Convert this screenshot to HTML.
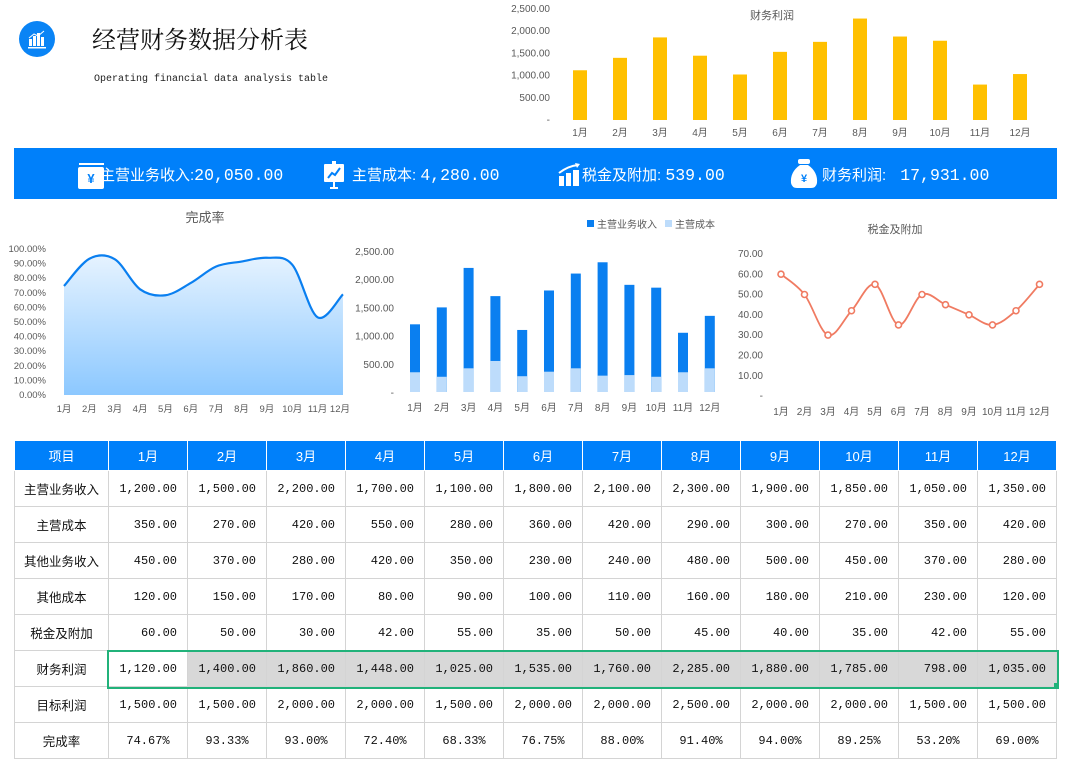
<!DOCTYPE html>
<html><head><meta charset="utf-8">
<style>
body{margin:0;width:1075px;height:769px;background:#fff;position:relative;overflow:hidden;font-family:"Liberation Sans","Noto Sans CJK SC",sans-serif}
.abs{position:absolute}
.banner{left:14px;top:148px;width:1043px;height:51px;background:#0080fa;color:#fff}
.bt{position:absolute;top:16px;font-size:15px;white-space:nowrap}
.bt .n{font-family:"Liberation Mono",monospace;font-size:16.5px}
table{position:absolute;left:14px;top:440px;border-collapse:collapse;table-layout:fixed}
td,th{border:1px solid #d4d4d4;height:35px;padding:0;font-size:12px;font-family:"Liberation Mono","Noto Sans CJK SC",monospace;color:#111}
th{background:#0080fa;color:#fff;font-weight:normal;height:29px;font-family:"Liberation Sans","Noto Sans CJK SC",sans-serif;font-size:13px;border-color:#fff}
td{text-align:right;padding-right:10px}
td.l{text-align:center;padding:0;font-family:"Liberation Sans","Noto Sans CJK SC",sans-serif;font-size:12.5px}
td.c{text-align:center;padding:0}
tr.p td.g{background:#d8d8d8}
svg text{font-family:"Liberation Sans","Noto Sans CJK SC",sans-serif}
</style></head><body>
<svg class="abs" style="left:19px;top:21px" width="36" height="36" viewBox="0 0 36 36">
<circle cx="18" cy="18" r="18" fill="#0a84f5"/>
<g fill="#fff"><rect x="10" y="18" width="3" height="7"/><rect x="14" y="15" width="3" height="10"/><rect x="18" y="12" width="3" height="13"/><rect x="22" y="16" width="3" height="9"/><rect x="9" y="26" width="18" height="1.5"/></g>
<polyline points="10,17 15,13 19,15 25,10" stroke="#fff" fill="none" stroke-width="1"/>
</svg>
<div class="abs" style="left:92px;top:20px;font-size:24px;font-family:'Liberation Serif','Noto Serif CJK SC',serif;color:#111">经营财务数据分析表</div>
<div class="abs" style="left:94px;top:74px;font-size:10px;font-family:'Liberation Mono',monospace;color:#222">Operating financial data analysis table</div>

<svg id="top" class="abs" style="left:500px;top:0" width="560" height="145"></svg>

<div class="abs banner">
 <svg class="abs" style="left:64px;top:15px" width="28" height="26" viewBox="0 0 28 26"><rect x="1" y="0" width="25" height="2" fill="#fff"/><rect x="0" y="4" width="26" height="22" rx="2" fill="#fff"/><text x="13" y="20" text-anchor="middle" fill="#0080fa" font-size="13" font-weight="bold">¥</text></svg>
 <div class="bt" style="left:86px">主营业务收入:<span class="n">20,050.00</span></div>
 <svg class="abs" style="left:310px;top:13px" width="20" height="28" viewBox="0 0 20 28"><rect x="8" y="0" width="4" height="3" fill="#fff"/><rect x="0" y="3" width="20" height="18" rx="1" fill="#fff"/><polyline points="4,17 8,12 11,14 16,7" stroke="#0080fa" stroke-width="2" fill="none"/><rect x="9" y="21" width="2" height="5" fill="#fff"/><rect x="6" y="26" width="8" height="2" fill="#fff"/></svg>
 <div class="bt" style="left:338px">主营成本: <span class="n">4,280.00</span></div>
 <svg class="abs" style="left:544px;top:14px" width="24" height="24" viewBox="0 0 24 24"><rect x="1" y="14" width="5" height="10" fill="#fff"/><rect x="8" y="11" width="5" height="13" fill="#fff"/><rect x="15" y="8" width="6" height="16" fill="#fff"/><path d="M1 11 Q10 4 20 3" stroke="#fff" stroke-width="2" fill="none"/><path d="M17 1 L22 2 L19 6Z" fill="#fff"/></svg>
 <div class="bt" style="left:568px">税金及附加: <span class="n">539.00</span></div>
 <svg class="abs" style="left:776px;top:11px" width="28" height="29" viewBox="0 0 28 29"><rect x="8" y="0" width="12" height="5" rx="2" fill="#fff"/><path d="M10 6 H18 Q28 13 27 24 Q26 29 21 29 H7 Q2 29 1 24 Q0 13 10 6Z" fill="#fff"/><text x="14" y="23" text-anchor="middle" fill="#0080fa" font-size="11" font-weight="bold">¥</text></svg>
 <div class="bt" style="left:808px">财务利润: <span class="n">&nbsp;17,931.00</span></div>
</div>

<svg id="c1" class="abs" style="left:0;top:200px" width="350" height="230"></svg>
<svg id="c2" class="abs" style="left:345px;top:200px" width="390" height="230"></svg>
<svg id="c3" class="abs" style="left:730px;top:200px" width="345" height="230"></svg>

<table id="tb"></table>
<div class="abs" style="left:107px;top:650px;width:948px;height:35px;border:2px solid #21b27a"></div>
<div class="abs" style="left:1054px;top:683px;width:5px;height:5px;background:#21b27a"></div>

<script>
const M=['1月','2月','3月','4月','5月','6月','7月','8月','9月','10月','11月','12月'];
const G='#595959';
function t(x,y,s,o){o=o||{};return `<text x="${x}" y="${y}" font-size="${o.fs||10}" fill="${o.c||G}" text-anchor="${o.a||'middle'}" ${o.f?'font-family="Liberation Mono,monospace"':''}>${s}</text>`}
function smooth(p){let d=`M${p[0][0]},${p[0][1]}`;for(let i=0;i<p.length-1;i++){const p0=p[i-1]||p[i],p1=p[i],p2=p[i+1],p3=p[i+2]||p2;const k=6;d+=` C${p1[0]+(p2[0]-p0[0])/k},${p1[1]+(p2[1]-p0[1])/k} ${p2[0]-(p3[0]-p1[0])/k},${p2[1]-(p3[1]-p1[1])/k} ${p2[0]},${p2[1]}`}return d}
let s='';const yl=['2,500.00','2,000.00','1,500.00','1,000.00','500.00','-'];
yl.forEach((l,i)=>s+=t(50,12+i*22.2,l,{a:'end',f:1}));
s+=t(272,19,'财务利润',{fs:11});
const fp=[1120,1400,1860,1448,1025,1535,1760,2285,1880,1785,798,1035];
fp.forEach((v,i)=>{const x=80+i*40,h=v*111/2500;s+=`<rect x="${x-7}" y="${120-h}" width="14" height="${h}" fill="#ffc000"/>`;s+=t(x,136,M[i])});
document.getElementById('top').innerHTML=s;
s=`<defs><linearGradient id="g" x1="0" y1="0" x2="0" y2="1"><stop offset="0" stop-color="#e6f3ff"/><stop offset="1" stop-color="#8cc8ff"/></linearGradient></defs>`;
s+=t(205,22,'完成率',{fs:13});
for(let i=0;i<=10;i++)s+=t(46,52+i*14.6,(100-i*10)+'.00%',{a:'end',fs:9.5,f:1});
const cr=[74.67,93.33,93,72.4,68.33,76.75,88,91.4,94,89.25,53.2,69];
const pts=cr.map((v,i)=>[64+i*25.36,195-v*1.46]);
const d=smooth(pts);
s+=`<path d="${d} L343,195 L64,195Z" fill="url(#g)"/><path d="${d}" stroke="#0a7ff0" stroke-width="2.2" fill="none"/>`;
cr.forEach((v,i)=>s+=t(64+i*25.36-(i==11?3:0),212,M[i],{fs:9.5}));
document.getElementById('c1').innerHTML=s;
s='';['2,500.00','2,000.00','1,500.00','1,000.00','500.00','-'].forEach((l,i)=>s+=t(49,55+i*28.2,l,{a:'end',f:1}));
s+=`<rect x="242" y="20" width="7" height="7" fill="#0a7ff0"/>`+t(252,28,'主营业务收入',{a:'start'})+`<rect x="320" y="20" width="7" height="7" fill="#bddcfb"/>`+t(330,28,'主营成本',{a:'start'});
const rv=[1200,1500,2200,1700,1100,1800,2100,2300,1900,1850,1050,1350],co=[350,270,420,550,280,360,420,290,300,270,350,420];
rv.forEach((v,i)=>{const x=70+i*26.8,h=v*141/2500,hc=co[i]*141/2500;s+=`<rect x="${x-5}" y="${192-h}" width="10" height="${h}" fill="#0a7ff0"/><rect x="${x-5}" y="${192-hc}" width="10" height="${hc}" fill="#bddcfb"/>`;s+=t(x,211,M[i])});
document.getElementById('c2').innerHTML=s;
s=t(165,33,'税金及附加',{fs:11});
['70.00','60.00','50.00','40.00','30.00','20.00','10.00','-'].forEach((l,i)=>s+=t(33,57+i*20.3,l,{a:'end',f:1}));
const tx=[60,50,30,42,55,35,50,45,40,35,42,55];
const tp=tx.map((v,i)=>[51+i*23.5,196-v*2.03]);
s+=`<path d="${smooth(tp)}" stroke="#f07b62" stroke-width="1.8" fill="none"/>`;
tp.forEach(p=>s+=`<circle cx="${p[0]}" cy="${p[1]}" r="3" fill="#fff" stroke="#f07b62" stroke-width="1.6"/>`);
tx.forEach((v,i)=>s+=t(51+i*23.5,215,M[i]));
document.getElementById('c3').innerHTML=s;
const R=[['主营业务收入',['1,200.00','1,500.00','2,200.00','1,700.00','1,100.00','1,800.00','2,100.00','2,300.00','1,900.00','1,850.00','1,050.00','1,350.00']],
['主营成本',['350.00','270.00','420.00','550.00','280.00','360.00','420.00','290.00','300.00','270.00','350.00','420.00']],
['其他业务收入',['450.00','370.00','280.00','420.00','350.00','230.00','240.00','480.00','500.00','450.00','370.00','280.00']],
['其他成本',['120.00','150.00','170.00','80.00','90.00','100.00','110.00','160.00','180.00','210.00','230.00','120.00']],
['税金及附加',['60.00','50.00','30.00','42.00','55.00','35.00','50.00','45.00','40.00','35.00','42.00','55.00']],
['财务利润',['1,120.00','1,400.00','1,860.00','1,448.00','1,025.00','1,535.00','1,760.00','2,285.00','1,880.00','1,785.00','798.00','1,035.00']],
['目标利润',['1,500.00','1,500.00','2,000.00','2,000.00','1,500.00','2,000.00','2,000.00','2,500.00','2,000.00','2,000.00','1,500.00','1,500.00']],
['完成率',['74.67%','93.33%','93.00%','72.40%','68.33%','76.75%','88.00%','91.40%','94.00%','89.25%','53.20%','69.00%']]];
let h='<colgroup><col style="width:94px">'+M.map(()=>'<col style="width:79px">').join('')+'</colgroup><tr><th>项目</th>'+M.map(m=>`<th>${m}</th>`).join('')+'</tr>';
R.forEach((r,ri)=>{h+=`<tr class="${ri==5?'p':''}"><td class="l">${r[0]}</td>`+r[1].map((v,i)=>`<td class="${ri==7?'c':''} ${i>0?'g':''}">${v}</td>`).join('')+'</tr>'});
document.getElementById('tb').innerHTML=h;
</script>
</body></html>
